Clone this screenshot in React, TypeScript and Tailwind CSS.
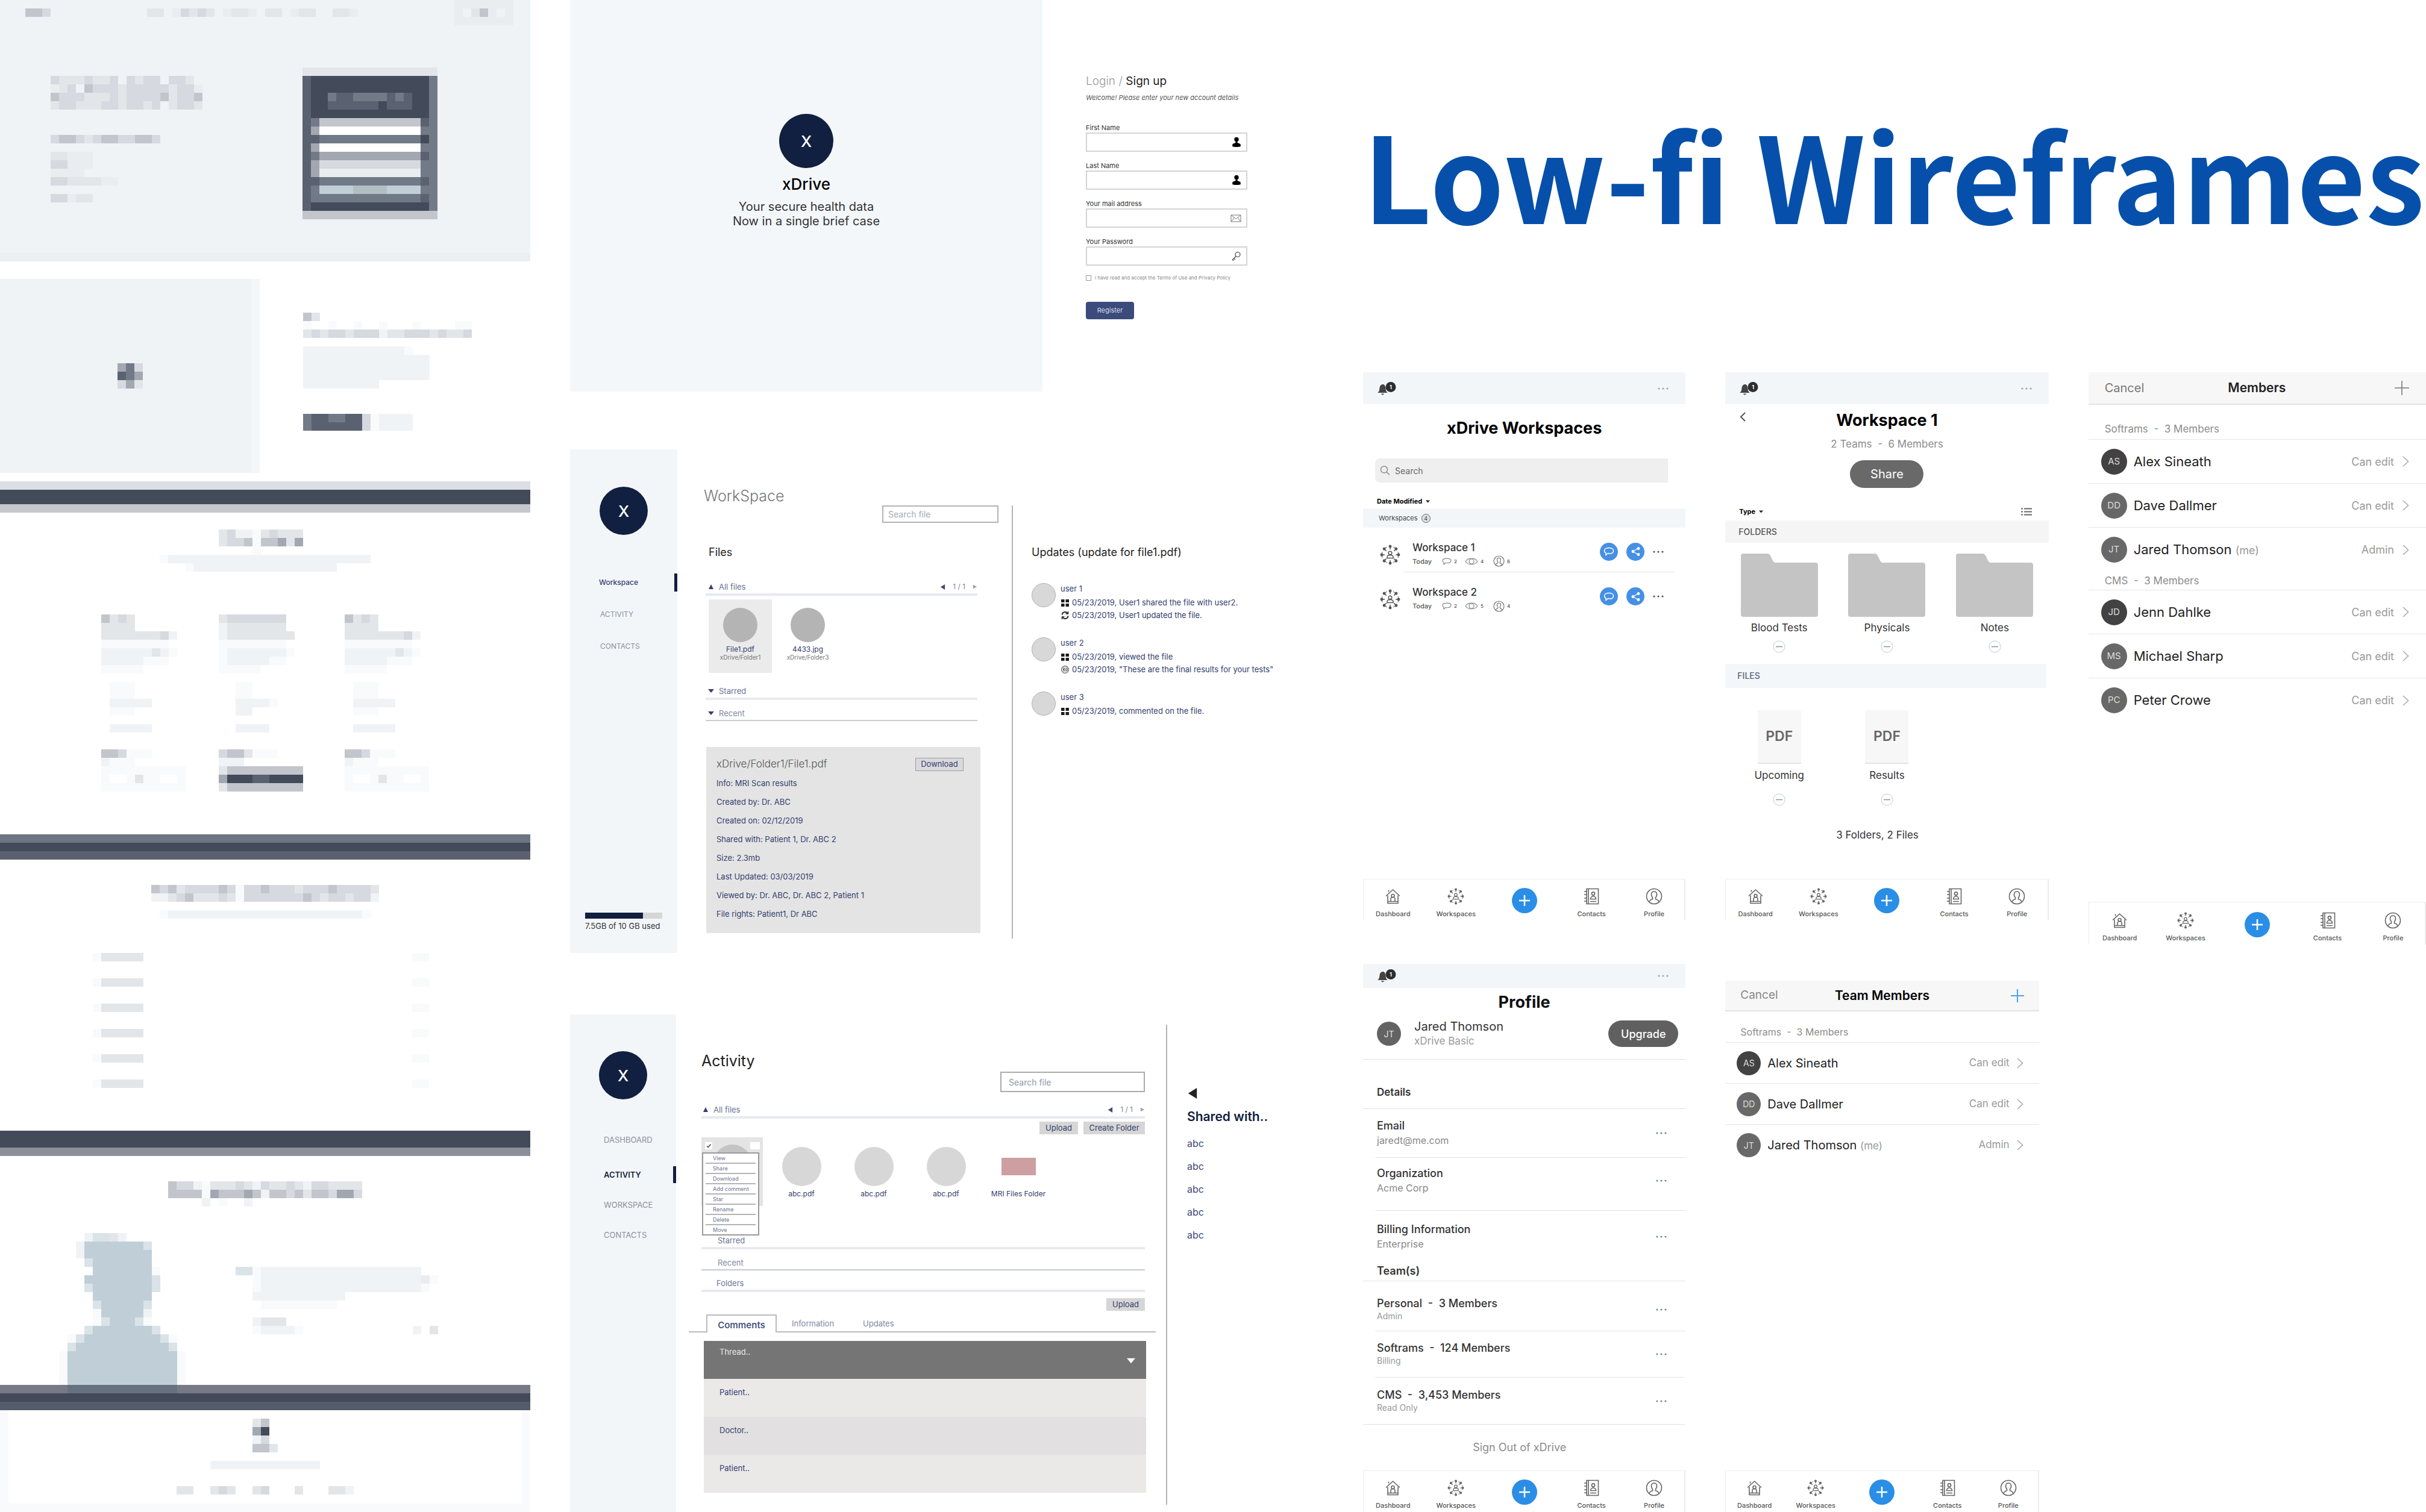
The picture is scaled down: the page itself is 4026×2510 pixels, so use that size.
import React from "react";

/* ---------- Mosaic drawings of the landing page ---------- */

const CELL = 14;

const PALETTE: Record<string, string> = {
  a: "#f9fafb",
  b: "#f0f3f6",
  k: "#e9edf0",
  c: "#e3e6e9",
  d: "#d6d9df",
  e: "#c2c5cc",
  f: "#a3a7b1",
  g: "#737a87",
  x: "#6f7a86",
  h: "#5a6171",
  i: "#434a5a",
  w: "#ffffff",
  t: "#c0cfd7",
  s: "#b1bfc4",
  u: "#d9e3e8",
};

function Mosaic({ rows }: { rows: string[] }) {
  const cols = Math.max(...rows.map((r) => r.length));
  const rects: React.ReactNode[] = [];
  rows.forEach((row, y) => {
    let x = 0;
    while (x < row.length) {
      const ch = row[x];
      let end = x + 1;
      while (end < row.length && row[end] === ch) end++;
      if (PALETTE[ch]) {
        rects.push(<rect key={`${x}-${y}`} x={x} y={y} width={end - x} height={1} fill={PALETTE[ch]} />);
      }
      x = end;
    }
  });
  return (
    <svg
      aria-hidden="true"
      className="block shrink-0"
      width={cols * CELL}
      height={rows.length * CELL}
      viewBox={`0 0 ${cols} ${rows.length}`}
      shapeRendering="crispEdges"
    >
      {rects}
    </svg>
  );
}

const heroCopy = [
  "dcccdccdbdcddbddc",
  "kcdbedddcdddddcddk",
  "edddcccdcddddecdde",
  "cddcccddcddcdbcddc",
  "",
  "",
  "",
  "deedcdeeddeed",
  "",
  "cckkk",
  "ddkkk",
  "kkkk",
  "ddcccckk",
  "",
  "ddkcc",
];

const heroForm = [
  "cccccccccccccccc",
  "hiiiiiiiiiiiiiig",
  "hiiiiiiiiiiiiiig",
  "hiighhgggghghiig",
  "hiihhhhhhihhhiig",
  "hiiiiiiiiiiiiiig",
  "hgeeeeeeeeeeeehg",
  "hfwwwwwwwwwwwwgg",
  "hhxxxxxxxxxxxxig",
  "hfwwwwwwwwwwwwgg",
  "hgffffffffffffhg",
  "hfddddddddddddgg",
  "hfkkkkkkkkkkkkgg",
  "hhxxxxxxxxxxxxhg",
  "hgttttssssttttgg",
  "hxxxxxxxxxxxxxhg",
  "hiiiiiiiiiiiiiig",
  "eeeeeeeeeeeeeeee",
];

const introCopy = [
  "ec",
  "a..a..a..a...a....aa",
  "cdcddcdddbccdddcdccd",
  "",
  "bbbbbbbbbbbba",
  "bbbbbbbbbbbbbbb",
  "bbbbbbbbbbbbbbb",
  "bbbbbbbbbbbbbbb",
  "bbbbbbbbb",
  "",
  "",
  "",
  "ghhgghhdabbbb",
  "ghhhhhhdabbbb",
];

const plansTitle = [
  ".......cdbbacdccc",
  ".......cddeaeefcf",
  "...........a",
  "abbbbbbbbbbbbbbbbbbbbbbbb",
  "...abbbbbbbbbbbbbbbbb",
];

const planPlain = [
  "ecdc",
  "cccc",
  "cccccccdb",
  "aaaaaaaa",
  "bbbbbbcba",
  "bbbbbaaa",
  "aaaaa",
  "",
  ".aaa",
  ".aaa",
  ".bbbbb",
  ".aaa",
  "",
  ".bbbbb",
  "",
  "",
  "eedaaa",
  "baaa",
  "aaaaaaaaaa",
  "awwacaawwa",
  "aaaaaaaaaa",
];

const planActive = [
  "cddddddd",
  "bccccccc",
  "bcccccccc",
  "aaaaaaaa",
  "abbbbbbba",
  "abbbbbaa",
  "aaaaa",
  "",
  "..aa",
  "..aa",
  "..bbbba",
  "..bb",
  "",
  "..bbbb",
  "",
  "",
  "deecaaa",
  "bbb",
  "ceeeeeeeee",
  "fiiihhiiii",
  "ceeeeeeeee",
];

const faqTitle = [
  "edecddddedaddedddcdddeddddc",
  "bbcdecccdcadddddddedcddcddb",
  "",
  ".abbbbbbbbbbbbbbbbbbbbbbba",
];

const peopleTitle = ["eddbacccdcbdccdcbddcccc", "eeeeafeeefebeedeceedffd", "....b.a..b"];

const silhouette = [
  "...buucb",
  "..btttttttu",
  "..btttttttt",
  "...uttttttt",
  "....ttttttta",
  "...ttttttttu",
  "...utttttttu",
  "....ttttttt",
  "....utttttu",
  "....atttttb",
  "....autttua",
  "...utttttttu",
  ".autttttttttua",
  ".utttttttttttu",
  "attttttttttttta",
  "attttttttttttta",
  "attttttttttttta",
  "attttttttttttta",
];

const quote = [
  "uuabbbbbbbbbbbbbbbbbbb",
  "..abbbbbbbbbbbbbbbbbbbka",
  "..abbbbbbbbbbbbbbbbbbba",
  "..bbbbbbbbbbb",
  "...aaaaaaaaa",
  "",
  "..bccc",
  "..abbbba.............b.c",
];

const footerArt = [
  ".........ce",
  ".........fi",
  ".........bd",
  ".........eec",
  "",
  "....bbbbbbbbbbbbb",
  "",
  "",
  "cc..cdc..cd...c...ccb",
];

function LandingPage() {
  return (
    <section aria-label="Landing page" className="flex min-w-0 flex-col">
      <div className="border-b-[14px] border-[#ebeff2] bg-[#eff3f6]">
        <div className="flex items-start justify-between pr-7 pl-[42px]">
          <div className="pt-3.5">
            <Mosaic rows={["eed"]} />
          </div>
          <div className="pt-3.5">
            <Mosaic rows={["cc.kdcdc.kcck.cc.kcc..cck"]} />
          </div>
          <Mosaic rows={["kkkkkkk", "kbcekbk", "kkkkkkk"]} />
        </div>
        <div className="flex items-start justify-between pt-[70px] pr-[154px] pb-14 pl-[84px]">
          <div className="pt-3.5">
            <Mosaic rows={heroCopy} />
          </div>
          <Mosaic rows={heroForm} />
        </div>
      </div>

      <div className="flex items-stretch pt-[29px] pb-3.5">
        <div className="flex h-[322px] w-[49%] items-center justify-center border-r-[14px] border-[#f3f7fa] bg-[#eff3f6] pl-3.5">
          <Mosaic rows={["fgd", "hgf", "dfc"]} />
        </div>
        <div className="pt-14 pl-[72px]">
          <Mosaic rows={introCopy} />
        </div>
      </div>

      <div className="h-[52px] border-t-[14px] border-b-[14px] border-t-[#dbdee2] border-b-[#c4c7ce] bg-[#434a5a]" />

      <div className="pt-7 pb-[71px]">
        <div className="flex justify-center">
          <Mosaic rows={plansTitle} />
        </div>
        <div className="grid grid-cols-[14fr_15fr_10fr] px-[168px] pt-[71px]">
          <Mosaic rows={planPlain} />
          <Mosaic rows={planActive} />
          <Mosaic rows={planPlain} />
        </div>
      </div>

      <div className="h-[42px] border-t-[14px] border-b-[14px] border-t-[#6e7582] border-b-[#5a6070] bg-[#434a5a]" />

      <div className="pt-[42px] pb-[71px]">
        <div className="flex justify-center">
          <Mosaic rows={faqTitle} />
        </div>
        <ul className="flex flex-col gap-7 pt-[57px] pr-[168px] pl-[154px]">
          {[1, 2, 3, 4, 5, 6].map((n) => (
            <li key={n} className="flex justify-between">
              <Mosaic rows={["accccc"]} />
              <Mosaic rows={["aa"]} />
            </li>
          ))}
        </ul>
      </div>

      <div className="h-[42px] border-b-[14px] border-[#8b8f9a] bg-[#434a5a]" />

      <div className="pt-[42px]">
        <div className="flex justify-center">
          <Mosaic rows={peopleTitle} />
        </div>
        <div className="flex items-start gap-[83px] pt-11 pl-[98px]">
          <Mosaic rows={silhouette} />
          <div className="pt-14">
            <Mosaic rows={quote} />
          </div>
        </div>
      </div>

      <div className="border-b-[14px] border-[#545b6b] bg-[#434a5a] pb-3.5">
        <div className="h-3.5 bg-[#757a86] pl-[112px]">
          <div className="h-full w-[182px] bg-[#66717f]" />
        </div>
      </div>

      <div className="flex flex-1 justify-center border-x-[14px] border-b-[14px] border-[#f9fafb] pt-3.5">
        <Mosaic rows={footerArt} />
      </div>
    </section>
  );
}

/* ---------- Shared drawings ---------- */

function PersonSolid() {
  return (
    <svg aria-hidden="true" width="16" height="18" viewBox="0 0 16 18" fill="#000">
      <circle cx="8" cy="4.500" r="3.700" />
      <path d="M6.500 7h3v3l4 1.500c1 .5 1.300 1.300 1.300 2.300V16c-2 1.300-11.600 1.300-13.600 0v-2.200c0-1 .3-1.800 1.300-2.300l4-1.500z" />
    </svg>
  );
}

function Envelope() {
  return (
    <svg aria-hidden="true" width="18" height="13" viewBox="0 0 18 13" fill="none" stroke="#777" strokeWidth="1">
      <path d="M1 1h16v11H1zM1 1l8 6.500L17 1M1 12l5.500-7M17 12l-5.500-7" />
    </svg>
  );
}

function KeyIcon() {
  return (
    <svg aria-hidden="true" width="17" height="17" viewBox="0 0 17 17" fill="none" stroke="#444" strokeWidth="1.200">
      <circle cx="11" cy="5.500" r="4" />
      <path d="M8 8.500 2 14.500M2 14.500l2.500 1M4.500 12l2.500 2" />
    </svg>
  );
}

function Tri({ dir, size, color }: { dir: "up" | "down" | "left" | "right"; size: number; color: string }) {
  const d = { up: "M5 1 9 9H1z", down: "M0 2h10L5 8z", left: "M9 0v10L1 5z", right: "M1 1v8l8-4z" }[dir];
  return (
    <svg aria-hidden="true" className="shrink-0" width={size} height={size} viewBox="0 0 10 10" fill={color}>
      <path d={d} />
    </svg>
  );
}

function GridIcon() {
  return (
    <svg aria-hidden="true" className="shrink-0" width="15" height="14" viewBox="0 0 15 14" fill="#1c1c1c">
      <path d="M1 1h5.500v5H1zM8.500 1H14v5H8.500zM1 8h5.500v5H1zM8.500 8H14v5H8.500z" />
    </svg>
  );
}

function RefreshIcon() {
  return (
    <svg aria-hidden="true" className="shrink-0" width="15" height="15" viewBox="0 0 15 15" fill="none" stroke="#222" strokeWidth="2">
      <path d="M2.500 6.500a5 5 0 0 1 9-2.500M12.500 8.500a5 5 0 0 1-9 2.500" />
      <path d="M12.500 1v4h-4M2.500 14v-4h4" strokeWidth="1.500" />
    </svg>
  );
}

function QuoteIcon() {
  return (
    <svg aria-hidden="true" className="shrink-0" width="15" height="15" viewBox="0 0 16 15" fill="none" stroke="#555" strokeWidth="1.200">
      <circle cx="8" cy="7.500" r="6.300" />
      <path d="M5 4v7M8 4l-2 3 2 4M11 4 9 7.500 11 11M12 5v5" />
    </svg>
  );
}

/* ---------- Sign up screen ---------- */

function Field({ id, label, icon, type = "text" }: { id: string; label: string; icon: React.ReactNode; type?: string }) {
  return (
    <div>
      <label htmlFor={id} className="block text-[11px] leading-[14px] text-[#333]">
        {label}
      </label>
      <div className="mt-px flex h-8 items-center border-2 border-[#d4d4d4] pr-2">
        <input id={id} type={type} className="min-w-0 flex-1 bg-transparent px-2 text-[12px] outline-none" />
        {icon}
      </div>
    </div>
  );
}

function SignUpScreen() {
  return (
    <section aria-label="Sign up" className="grid grid-cols-[784fr_466fr]">
      <div className="flex min-h-[650px] flex-col items-center bg-[#f3f7fa] pt-[189px]">
        <div className="flex size-[90px] items-center justify-center rounded-full bg-[#111f40] text-[26px] font-medium text-white">X</div>
        <h2 className="mt-3 text-[26px] leading-[30px] font-medium text-black">xDrive</h2>
        <p className="mt-2.5 text-center text-[20px] leading-6 text-[#333]">
          Your secure health data
          <br />
          Now in a single brief case
        </p>
      </div>
      <form className="pt-[121px] pl-[72px]" onSubmit={(e) => e.preventDefault()}>
        <div className="w-[268px]">
          <h2 className="text-[19px] leading-7 whitespace-nowrap text-[#222]">
            <a href="#login" className="font-light text-[#999]">
              Login /
            </a>{" "}
            Sign up
          </h2>
          <p className="mt-[5px] text-[11px] leading-4 whitespace-nowrap text-[#555] italic">Welcome! Please enter your new account details</p>
          <div className="mt-[35px] flex flex-col gap-4">
            <Field id="first" label="First Name" icon={<PersonSolid />} />
            <Field id="last" label="Last Name" icon={<PersonSolid />} />
            <Field id="mail" label="Your mail address" type="email" icon={<Envelope />} />
            <Field id="pass" label="Your Password" type="password" icon={<KeyIcon />} />
          </div>
          <label className="mt-3.5 flex items-center gap-1.5 text-[8px] leading-3 whitespace-nowrap text-[#8a8a8a]">
            <input type="checkbox" className="size-[9px] appearance-none border border-[#999]" />I have read and accept the Terms of Use and Privacy Policy
          </label>
          <button type="submit" className="mt-[34px] h-[29px] w-20 rounded-sm bg-[#3b4b7b] text-[11px] text-[#d5daea]">
            Register
          </button>
        </div>
      </form>
    </section>
  );
}

/* ---------- Workspace screen ---------- */

function Logo() {
  return <div className="flex size-20 items-center justify-center self-center rounded-full bg-[#111f40] text-[26px] font-medium text-white">X</div>;
}

function Pager() {
  return (
    <div className="flex items-center text-[12px] text-[#7f88a3]">
      <button type="button" aria-label="Previous page">
        <Tri dir="left" size={9} color="#3c4a78" />
      </button>
      <span className="mx-3">1 / 1</span>
      <button type="button" aria-label="Next page">
        <Tri dir="right" size={8} color="#9aa2ba" />
      </button>
    </div>
  );
}

const fileFacts = [
  "Info: MRI Scan results",
  "Created by: Dr. ABC",
  "Created on: 02/12/2019",
  "Shared with: Patient 1, Dr. ABC 2",
  "Size: 2.3mb",
  "Last Updated: 03/03/2019",
  "Viewed by: Dr. ABC, Dr. ABC 2, Patient 1",
  "File rights: Patient1, Dr ABC",
];

const updates = [
  {
    user: "user 1",
    lines: [
      { icon: <GridIcon />, text: "05/23/2019, User1 shared the file with user2." },
      { icon: <RefreshIcon />, text: "05/23/2019, User1 updated the file." },
    ],
  },
  {
    user: "user 2",
    lines: [
      { icon: <GridIcon />, text: "05/23/2019, viewed the file" },
      { icon: <QuoteIcon />, text: '05/23/2019, "These are the final results for your tests"' },
    ],
  },
  { user: "user 3", lines: [{ icon: <GridIcon />, text: "05/23/2019, commented on the file." }] },
];

function FileTile({ name, path, selected }: { name: string; path: string; selected?: boolean }) {
  return (
    <div className={`flex w-[105px] flex-col items-center pt-3.5 pb-[21px] ${selected ? "bg-[#ebebeb]" : ""}`}>
      <div className="size-[57px] rounded-full bg-[#b4b4b4]" />
      <div className="mt-[5px] text-[12px] leading-[14px] text-[#33406e]">{name}</div>
      <div className="mt-px text-[10px] leading-[10px] text-[#777]">{path}</div>
    </div>
  );
}

function WorkspaceScreen() {
  return (
    <section aria-label="Workspace" className="mt-24 grid grid-cols-[178fr_555fr_517fr]">
      <aside className="flex min-h-[836px] flex-col bg-[#f3f6f9] pt-[62px]">
        <Logo />
        <nav className="mt-16 flex flex-col gap-[23px] text-[12px] leading-[30px] text-[#8b909c]">
          <a href="#workspace" className="border-r-[5px] border-[#111f40] pl-12 font-medium text-[#33406e]">
            Workspace
          </a>
          <a href="#activity" className="pl-[50px]">
            ACTIVITY
          </a>
          <a href="#contacts" className="pl-[50px]">
            CONTACTS
          </a>
        </nav>
        <div className="mt-auto px-[25px] pb-[37px]">
          <div className="h-2.5 bg-[#d6d6d6]">
            <div className="h-full w-3/4 bg-[#111f40]" />
          </div>
          <div className="mt-1 text-[13px] leading-4 whitespace-nowrap text-[#333]">7.5GB of 10 GB used</div>
        </div>
      </aside>

      <div className="flex flex-col pt-[62px] pr-[22px] pl-11">
        <h2 className="text-[25px] leading-[31px] font-light text-[#777]">WorkSpace</h2>
        <input
          type="search"
          aria-label="Search file"
          placeholder="Search file"
          className="h-[29px] w-[193px] self-end border-2 border-[#b4b4b4] px-2 text-[14px] outline-none placeholder:text-[#a4aab8]"
        />
        <h3 className="mt-[37px] pl-2 text-[18px] leading-6 text-[#222]">Files</h3>
        <div className="mt-[34px] mr-[35px] ml-[3px]">
          <div className="flex items-center justify-between border-b-4 border-[#e8e9f0] pl-1 text-[13px] leading-[22px] text-[#6a7394]">
            <span className="flex items-center gap-2">
              <Tri dir="up" size={10} color="#33406e" />
              All files
            </span>
            <Pager />
          </div>
          <div className="mt-1.5 flex gap-[7px] pl-[5px]">
            <FileTile name="File1.pdf" path="xDrive/Folder1" selected />
            <FileTile name="4433.jpg" path="xDrive/Folder3" />
          </div>
          <div className="mt-[19px] flex items-center gap-2 border-b-4 border-[#e9eaed] pl-1 text-[13px] leading-[22px] text-[#6a7394]">
            <Tri dir="down" size={10} color="#33406e" />
            Starred
          </div>
          <div className="mt-[11px] flex items-center gap-2 border-b-2 border-[#c9ccd4] pl-1 text-[13px] leading-[22px] text-[#7f88a3]">
            <Tri dir="down" size={10} color="#33406e" />
            Recent
          </div>
        </div>
        <div className="mt-[43px] mr-[30px] ml-1 bg-[#e4e4e4] pt-[18px] pr-7 pb-4 pl-[17px]">
          <div className="flex h-[22px] items-center justify-between">
            <h3 className="text-[17px] font-light text-[#555]">xDrive/Folder1/File1.pdf</h3>
            <button type="button" className="h-[22px] w-20 border border-[#9a9dab] bg-[#d9d9dc] text-[13px] text-[#33406e]">
              Download
            </button>
          </div>
          <ul className="mt-[5px] text-[13px] leading-[31px] text-[#33406e]">
            {fileFacts.map((f) => (
              <li key={f}>{f}</li>
            ))}
          </ul>
        </div>
      </div>

      <div className="mt-[93px] mb-6 border-l-2 border-[#b5b5b5] pt-[66px] pl-[31px]">
        <h3 className="text-[18px] leading-6 text-[#222]">Updates (update for file1.pdf)</h3>
        <ul className="mt-[39px] flex flex-col gap-6">
          {updates.map((u) => (
            <li key={u.user} className="flex min-h-[66px] gap-2">
              <div className="size-10 shrink-0 rounded-full border border-[#b0b0b0] bg-[#d8d8d8]" />
              <div className="pt-0.5 text-[13px] whitespace-nowrap text-[#33406e]">
                <div className="mb-1.5 leading-[14px]">{u.user}</div>
                {u.lines.map((l) => (
                  <div key={l.text} className="flex items-center gap-1 leading-[21px]">
                    {l.icon}
                    {l.text}
                  </div>
                ))}
              </div>
            </li>
          ))}
        </ul>
      </div>
    </section>
  );
}

/* ---------- Activity screen ---------- */

const menuItems = ["View", "Share", "Download", "Add comment", "Star", "Rename", "Delete", "Move"];

function ActivityScreen() {
  return (
    <section aria-label="Activity" className="mt-[102px] grid flex-1 grid-cols-[176fr_813fr_261fr]">
      <aside className="flex flex-col bg-[#f3f6f9] pt-[61px]">
        <Logo />
        <nav className="mt-[53px] flex flex-col gap-[22px] text-[13px] leading-7 text-[#8b909c]">
          <a href="#dashboard" className="mb-2 pl-14">
            DASHBOARD
          </a>
          <a href="#activity" className="border-r-[5px] border-[#111f40] pl-14 font-semibold text-[#111f40]">
            ACTIVITY
          </a>
          <a href="#workspace" className="pl-14">
            WORKSPACE
          </a>
          <a href="#contacts" className="pl-14">
            CONTACTS
          </a>
        </nav>
      </aside>

      <div className="flex flex-col pt-[61px] pr-[35px] pl-[42px]">
        <h2 className="text-[25px] leading-8 text-[#222]">Activity</h2>
        <input
          type="search"
          aria-label="Search file"
          placeholder="Search file"
          className="mt-0.5 h-[34px] w-60 self-end border-2 border-[#aaa] px-3 text-[14px] outline-none placeholder:text-[#8e97ab]"
        />
        <div className="mt-[18px] flex items-center justify-between border-b-4 border-[#e8e9f0] pl-0.5 text-[13px] leading-[22px] text-[#6a7394]">
          <span className="flex items-center gap-2">
            <Tri dir="up" size={10} color="#33406e" />
            All files
          </span>
          <Pager />
        </div>
        <div className="mt-[5px] flex justify-end gap-[9px] text-[13px] leading-[21px] text-[#33406e]">
          <button type="button" className="w-16 bg-[#d6d6d6]">
            Upload
          </button>
          <button type="button" className="w-[102px] bg-[#d6d6d6]">
            Create Folder
          </button>
        </div>

        <div className="mt-[5px] flex">
          <div className="relative mr-1 flex h-[114px] w-[102px] justify-center bg-[#e4e4e4] pt-3">
            <div className="size-[65px] rounded-full bg-[#c4c4c4]" />
            <input
              type="checkbox"
              defaultChecked
              aria-label="Select file"
              className="absolute top-2 left-1.5 size-3 appearance-none bg-white"
            />
            <svg aria-hidden="true" className="absolute top-2 left-1.5" width="12" height="12" viewBox="0 0 12 12" fill="none" stroke="#444" strokeWidth="1.500">
              <path d="m3 6.500 2 2L9.500 3.500" />
            </svg>
            <button type="button" aria-label="File menu" className="absolute top-2 right-[5px] h-3 w-4 bg-white" />
            <ul className="absolute top-[25px] left-px flex w-[95px] flex-col border-2 border-[#999] bg-white px-1 text-[9px] leading-[15px] text-[#6a7394]">
              {menuItems.map((m) => (
                <li key={m} className="border-b-2 border-[#b4b4b4] pl-3 last:border-b-0">
                  <button type="button" className="block">
                    {m}
                  </button>
                </li>
              ))}
            </ul>
          </div>
          {[1, 2, 3].map((n) => (
            <div key={n} className="flex w-[120px] flex-col items-center pt-4 text-[12px] leading-4 text-[#33406e]">
              <div className="mb-[5px] size-[65px] rounded-full bg-[#d7d7d7]" />
              abc.pdf
            </div>
          ))}
          <div className="flex w-[120px] flex-col items-center pt-4 text-[12px] leading-4 text-[#33406e]">
            <div className="mb-[5px] flex h-[65px] items-center">
              <div className="h-[29px] w-[57px] bg-[#cd9fa1]" />
            </div>
            MRI Files Folder
          </div>
        </div>

        <div className="mt-[46px] border-b-4 border-[#e9eaed] pl-[27px] text-[13px] leading-[22px] text-[#6a7394]">Starred</div>
        <div className="mt-[11px] border-b-2 border-[#c5c8d4] pl-[27px] text-[13px] leading-[22px] text-[#7f88a3]">Recent</div>
        <div className="mt-2.5 border-b-4 border-[#e8e9f0] pl-[25px] text-[13px] leading-[22px] text-[#6a7394]">Folders</div>
        <button type="button" className="mt-2.5 w-16 self-end bg-[#d6d6d6] text-[13px] leading-[21px] text-[#33406e]">
          Upload
        </button>

        <div role="tablist" className="mt-1.5 -mr-[18px] -ml-[21px] flex h-[30px] items-end border-b-2 border-[#bbb] pl-[29px] text-[13px] text-[#7f88a3]">
          <button
            type="button"
            role="tab"
            aria-selected="true"
            className="-mb-0.5 h-[30px] w-[117px] border-2 border-b-0 border-[#bbb] bg-white pt-1 text-[15px] font-semibold text-[#4a5680]"
          >
            Comments
          </button>
          <button type="button" role="tab" aria-selected="false" className="ml-[25px] h-6">
            Information
          </button>
          <button type="button" role="tab" aria-selected="false" className="ml-12 h-6">
            Updates
          </button>
        </div>

        <div className="mt-3.5 -mr-0.5 ml-1 text-[13px] leading-4 text-[#33406e]">
          <div className="flex h-[63px] items-start justify-between bg-[#757575] pt-2.5 pr-[18px] pl-[26px] text-[#e6e6e6]">
            Thread..
            <button type="button" aria-label="Collapse thread" className="pt-4">
              <Tri dir="down" size={14} color="#fff" />
            </button>
          </div>
          <div className="h-[63px] bg-[#ebe8e8] pt-3.5 pl-[26px]">Patient..</div>
          <div className="h-[63px] bg-[#e2e0e0] pt-3.5 pl-[26px]">Doctor..</div>
          <div className="h-[63px] bg-[#ebe8e8] pt-3.5 pl-[26px]">Patient..</div>
        </div>
      </div>

      <div className="mt-[17px] mb-3 border-l-2 border-[#b5b5b5] pt-[105px] pl-[33px]">
        <button type="button" aria-label="Back" className="block">
          <Tri dir="left" size={18} color="#222" />
        </button>
        <h3 className="mt-[18px] text-[21px] leading-6 font-semibold whitespace-nowrap text-[#111f40]">Shared with..</h3>
        <ul className="mt-[13px] text-[16px] leading-[38px] text-[#3c4a78]">
          {[1, 2, 3, 4, 5].map((n) => (
            <li key={n}>abc</li>
          ))}
        </ul>
      </div>
    </section>
  );
}

/* ---------- Phone screens ---------- */

function HomeIcon() {
  return (
    <svg aria-hidden="true" width="25" height="28" viewBox="0 0 25 28" fill="none" stroke="#666" strokeWidth="1.600">
      <path d="M1 13.500 12.500 3 24 13.500M5.500 6.500v-3M4 12.500V25.500h17V12.500M4 22.500h17" />
      <circle cx="12.500" cy="13" r="2.500" />
      <path d="M9 22v-3.500c0-4 7-4 7 0V22" />
    </svg>
  );
}

function NetworkIcon({ size, color }: { size: number; color: string }) {
  const spokes = [0, 45, 90, 135, 180, 225, 270, 315];
  return (
    <svg aria-hidden="true" className="shrink-0" width={size} height={size} viewBox="0 0 34 34" fill="none" stroke={color} strokeWidth="1.500">
      <circle cx="17" cy="14" r="2.800" />
      <path d="M12 22.500v-2c0-4 10-4 10 0v2z" />
      {spokes.map((a) => (
        <g key={a} transform={`rotate(${a} 17 17)`}>
          <path d="M17 8V5" />
          <circle cx="17" cy="3" r="1.700" fill={color} />
        </g>
      ))}
      <path d="M8 6.500a14 14 0 0 1 4-2.300M22 4.200a14 14 0 0 1 4 2.300M4 22a14 14 0 0 1 0-10M30 12a14 14 0 0 1 0 10M8 27.500a14 14 0 0 0 4 2.300M22 29.800a14 14 0 0 0 4-2.300" strokeWidth="1" />
    </svg>
  );
}

function ContactsIcon() {
  return (
    <svg aria-hidden="true" width="26" height="28" viewBox="0 0 26 28" fill="none" stroke="#666" strokeWidth="1.600">
      <path d="M5 1.500h19.500v25H5zM8 1.500v25M1 6h5M1 11h5M1 17h5M1 22h5" />
      <circle cx="16" cy="9.500" r="2.600" />
      <path d="M11.500 18.500c0-6 9-6 9 0zM11 22.500h10" />
    </svg>
  );
}

function ProfileIcon({ size }: { size: number }) {
  return (
    <svg aria-hidden="true" width={size} height={size} viewBox="0 0 28 28" fill="none" stroke="#666" strokeWidth="1.600">
      <circle cx="14" cy="14" r="12.500" />
      <path d="M6 23.500c.5-3.500 3-4 5.500-5v-2.500c-3-3-3-10 2.500-10s5.500 7 2.500 10v2.500c2.500 1 5 1.500 5.500 5" />
    </svg>
  );
}

function TabBar({ tall }: { tall?: boolean }) {
  const item = "flex flex-col items-center gap-[7px] text-[11px] leading-4 font-medium text-[#555]";
  return (
    <nav
      className={`mt-auto grid grid-cols-[98fr_112fr_116fr_108fr_101fr] border-t border-r-2 border-l border-[#ececec] bg-white ${
        tall ? "h-[71px] pt-4" : "h-[69px] pt-3.5"
      }`}
    >
      <a href="#dashboard" className={item}>
        <HomeIcon />
        Dashboard
      </a>
      <a href="#workspaces" className={item}>
        <NetworkIcon size={28} color="#666" />
        Workspaces
      </a>
      <button type="button" aria-label="Add" className="flex size-[42px] items-center justify-center justify-self-center rounded-full bg-[#2a8ee6]">
        <svg aria-hidden="true" width="18" height="18" viewBox="0 0 18 18" stroke="#fff" strokeWidth="2.500">
          <path d="M9 0v18M0 9h18" />
        </svg>
      </button>
      <a href="#contacts" className={item}>
        <ContactsIcon />
        Contacts
      </a>
      <a href="#profile" className={item}>
        <ProfileIcon size={28} />
        Profile
      </a>
    </nav>
  );
}

function Dots({ color }: { color: string }) {
  return (
    <svg aria-hidden="true" width="18" height="4" viewBox="0 0 18 4" fill={color}>
      <circle cx="2" cy="2" r="1.600" />
      <circle cx="9" cy="2" r="1.600" />
      <circle cx="16" cy="2" r="1.600" />
    </svg>
  );
}

function StatusBar({ short }: { short?: boolean }) {
  return (
    <div className={`flex items-center justify-between bg-[#f3f6f9] pr-7 pl-[23px] ${short ? "h-10" : "h-[53px]"}`}>
      <button type="button" aria-label="Notifications" className="relative">
        <svg aria-hidden="true" className="block" width="32" height="24" viewBox="0 0 32 24">
          <path d="M1 19c3-2 3-4 3.500-8C5 7 7 5.500 9.500 5S14 7 14.500 11c.5 4 .5 6 3.500 8z" fill="#444" />
          <path d="M7 20.500c1 2.500 4 2.500 5 0z" fill="#444" />
          <circle cx="23" cy="9.500" r="8.500" fill="#2e2e2e" />
        </svg>
        <span className="absolute top-[3px] right-[5px] w-2 text-center text-[9px] leading-[13px] font-bold text-white">1</span>
      </button>
      <button type="button" aria-label="More">
        <Dots color="#a0a4aa" />
      </button>
    </div>
  );
}

function WorkspaceRow({ name, comments, views, people, divider }: { name: string; comments: number; views: number; people: number; divider?: boolean }) {
  return (
    <li className="flex pl-7">
      <div className="flex w-[39px] items-center pt-4">
        <NetworkIcon size={34} color="#555" />
      </div>
      <div className={`mr-[17px] flex h-[74px] flex-1 items-center justify-between pt-3.5 pr-[19px] pl-[15px] ${divider ? "border-b border-[#e4e4e4]" : ""}`}>
        <div>
          <div className="text-[17px] leading-6 font-medium text-[#333]">{name}</div>
          <div className="flex items-center text-[11px] leading-[22px] font-medium text-[#555]">
            <span className="w-[49px]">Today</span>
            <span className="flex w-[38px] items-center gap-1 text-[8px]">
              <svg aria-hidden="true" width="16" height="12" viewBox="0 0 16 12" fill="none" stroke="#888" strokeWidth="1.200">
                <path d="M1 4.500C1 0 15 0 15 4.500S9 9 6 8.500L3 11V8C1.500 7 1 6 1 4.500z" />
              </svg>
              {comments}
            </span>
            <span className="flex w-[47px] items-center gap-1 text-[8px]">
              <svg aria-hidden="true" width="22" height="12" viewBox="0 0 22 12" fill="none" stroke="#888" strokeWidth="1.200">
                <path d="M1 6C5-.5 17-.5 21 6 17 12.500 5 12.500 1 6z" />
                <circle cx="11" cy="6" r="4" />
              </svg>
              {views}
            </span>
            <span className="flex items-center gap-1 text-[8px]">
              <ProfileIcon size={19} />
              {people}
            </span>
          </div>
        </div>
        <div className="flex items-center gap-3.5 pb-2">
          <button type="button" aria-label="Comment" className="flex size-[30px] items-center justify-center rounded-full bg-[#4590e4]">
            <svg aria-hidden="true" width="18" height="15" viewBox="0 0 18 15" fill="none" stroke="#fff" strokeWidth="1.500">
              <path d="M1.500 6C1.500 0 16.500 0 16.500 6S10 11 7.500 10.500L4 13.500V10C2 9 1.500 7.500 1.500 6z" />
            </svg>
          </button>
          <button type="button" aria-label="Share" className="flex size-[30px] items-center justify-center rounded-full bg-[#4590e4]">
            <svg aria-hidden="true" width="17" height="17" viewBox="0 0 17 17" fill="#fff" stroke="#fff" strokeWidth="1.300">
              <path d="M13 3 4 8.500 13 14" fill="none" />
              <circle cx="13" cy="3.500" r="1.800" />
              <circle cx="4" cy="8.500" r="1.800" />
              <circle cx="13" cy="13.500" r="1.800" />
            </svg>
          </button>
          <button type="button" aria-label="More">
            <Dots color="#555" />
          </button>
        </div>
      </div>
    </li>
  );
}

function PhoneWorkspaces() {
  return (
    <section aria-label="xDrive Workspaces" className="flex min-h-[910px] flex-col self-start">
      <StatusBar />
      <h2 className="mt-6 text-center text-[27px] leading-8 font-bold text-black">xDrive Workspaces</h2>
      <label className="mt-[34px] mr-[29px] ml-5 flex h-10 items-center gap-2 rounded-l-lg bg-[#efefef] px-2">
        <svg aria-hidden="true" width="17" height="18" viewBox="0 0 17 18" fill="none" stroke="#888" strokeWidth="1.400">
          <circle cx="7" cy="7.500" r="5.500" />
          <path d="m11 11.500 5 5" />
        </svg>
        <input type="search" placeholder="Search" className="min-w-0 flex-1 bg-transparent text-[14px] outline-none placeholder:text-[#666]" />
      </label>
      <button type="button" className="mt-[22px] flex items-center gap-1.5 self-start pl-[23px] text-[11px] leading-[18px] font-bold text-black">
        Date Modified <Tri dir="down" size={7} color="#222" />
      </button>
      <div className="mt-[3px] flex h-8 items-center gap-1.5 bg-[#f3f6f9] pl-[26px] text-[11px] text-[#444]">
        Workspaces
        <span className="flex size-[15px] items-center justify-center rounded-full border border-[#666] bg-[#dcdfe2] text-[9px] leading-none">4</span>
      </div>
      <ul>
        <WorkspaceRow name="Workspace 1" comments={2} views={4} people={6} divider />
        <WorkspaceRow name="Workspace 2" comments={2} views={5} people={4} />
      </ul>
      <TabBar />
    </section>
  );
}

function MinusBadge() {
  return (
    <button type="button" aria-label="Options" className="block">
      <svg aria-hidden="true" className="block" width="21" height="21" viewBox="0 0 21 21" fill="none">
        <circle cx="10.500" cy="10.500" r="9.500" stroke="#c4c8d4" />
        <path d="M5 10.500h11" stroke="#8b909c" strokeWidth="1.500" />
      </svg>
    </button>
  );
}

function PhoneWorkspace() {
  return (
    <section aria-label="Workspace 1" className="flex min-h-[910px] flex-col self-start">
      <StatusBar />
      <div className="mt-[11px] grid grid-cols-[48px_1fr_48px] items-start">
        <button type="button" aria-label="Back" className="pt-0.5 pl-6">
          <svg aria-hidden="true" width="10" height="16" viewBox="0 0 10 16" fill="none" stroke="#555" strokeWidth="2">
            <path d="M9 1 2 8l7 7" />
          </svg>
        </button>
        <h2 className="text-center text-[27px] leading-8 font-bold text-black">Workspace 1</h2>
      </div>
      <p className="mt-3 text-center text-[17px] leading-[22px] text-[#8c8c8c]">2 Teams &nbsp;-&nbsp; 6 Members</p>
      <button type="button" className="mt-4 h-[46px] w-[122px] self-center rounded-full bg-[#696969] text-[20px] text-white">
        Share
      </button>
      <div className="mt-[30px] flex items-center justify-between pr-7 pl-[23px]">
        <button type="button" className="flex items-center gap-1.5 text-[11px] leading-[18px] font-bold text-black">
          Type <Tri dir="down" size={7} color="#222" />
        </button>
        <svg aria-hidden="true" width="18" height="13" viewBox="0 0 18 13" stroke="#666" strokeWidth="2">
          <path d="M0 1.500h3M5 1.500h13M0 6.500h3M5 6.500h13M0 11.500h3M5 11.500h13" />
        </svg>
      </div>
      <h3 className="mt-1.5 bg-[#f5f5f5] pl-[22px] text-[14px] leading-[37px] font-medium text-[#555]">FOLDERS</h3>
      <div className="grid grid-cols-3 pt-[18px]">
        {["Blood Tests", "Physicals", "Notes"].map((n) => (
          <div key={n} className="flex flex-col items-center">
            <svg aria-hidden="true" width="128" height="105" viewBox="0 0 128 105">
              <path d="M4 0h40c3 0 4.500 2 6 5 2 5 3.500 9 7 10H124q4 0 4 4V101q0 4-4 4H4q-4 0-4-4V4Q0 0 4 0z" fill="#c4c4c4" />
            </svg>
            <div className="mt-2 mb-[11px] text-[17px] leading-5 text-[#333]">{n}</div>
            <MinusBadge />
          </div>
        ))}
      </div>
      <h3 className="mt-[18px] mr-1 bg-[#f3f7fa] pl-5 text-[14px] leading-10 font-medium text-[#5a6478]">FILES</h3>
      <div className="grid grid-cols-3 pt-[37px]">
        {["Upcoming", "Results"].map((n) => (
          <div key={n} className="flex flex-col items-center">
            <div className="flex h-[89px] w-[72px] items-center justify-center border-b-2 border-[#e3e3e3] bg-[#f7f7f7] text-[23px] font-semibold text-[#666]">
              PDF
            </div>
            <div className="mt-[9px] mb-5 text-[17px] leading-5 text-[#333]">{n}</div>
            <MinusBadge />
          </div>
        ))}
      </div>
      <p className="mt-[38px] pr-8 text-center text-[17px] leading-5 text-[#333]">3 Folders, 2 Files</p>
      <TabBar />
    </section>
  );
}

type Member = { initials: string; name: string; role: string; me?: boolean; dark?: boolean };

const softrams: Member[] = [
  { initials: "AS", name: "Alex Sineath", role: "Can edit", dark: true },
  { initials: "DD", name: "Dave Dallmer", role: "Can edit" },
  { initials: "JT", name: "Jared Thomson", role: "Admin", me: true },
];

const cms: Member[] = [
  { initials: "JD", name: "Jenn Dahlke", role: "Can edit", dark: true },
  { initials: "MS", name: "Michael Sharp", role: "Can edit" },
  { initials: "PC", name: "Peter Crowe", role: "Can edit" },
];

function MemberList({ members, compact }: { members: Member[]; compact?: boolean }) {
  return (
    <ul>
      {members.map((m) => (
        <li
          key={m.name}
          className={`flex items-center border-b border-[#e6e6e6] last:border-b-0 ${compact ? "h-[68px] pr-[26px] pl-[19px]" : "h-[73px] pr-7 pl-[21px]"}`}
        >
          <span
            className={`flex shrink-0 items-center justify-center rounded-full text-[#ddd] ${m.dark ? "bg-[#424242]" : "bg-[#686868]"} ${
              compact ? "size-10 text-[14px]" : "size-[43px] text-[15px]"
            }`}
          >
            {m.initials}
          </span>
          <span className={`ml-[11px] flex-1 whitespace-nowrap text-[#222] ${compact ? "text-[20px]" : "text-[22px]"}`}>
            {m.name} {m.me && <span className={`text-[#999] ${compact ? "text-[17px]" : "text-[18px]"}`}>(me)</span>}
          </span>
          <button type="button" className={`flex items-center text-[#999] ${compact ? "gap-3 text-[17px]" : "gap-3.5 text-[18px]"}`}>
            {m.role}
            <svg aria-hidden="true" width="11" height="18" viewBox="0 0 11 18" fill="none" stroke="#aaa" strokeWidth="1.600">
              <path d="m1 1 8.500 8L1 17" />
            </svg>
          </button>
        </li>
      ))}
    </ul>
  );
}

function PhoneMembers() {
  return (
    <section aria-label="Members" className="flex min-h-[950px] flex-col self-start">
      <header className="grid h-[54px] grid-cols-3 items-center border-b-2 border-[#e2e2e2] bg-[#f7f7f7] pr-7 pl-[27px]">
        <button type="button" className="justify-self-start text-[20px] text-[#777]">
          Cancel
        </button>
        <h2 className="text-center text-[21px] font-semibold text-[#222]">Members</h2>
        <button type="button" aria-label="Add member" className="justify-self-end">
          <svg aria-hidden="true" width="24" height="24" viewBox="0 0 24 24" stroke="#777" strokeWidth="1.500">
            <path d="M12 0v24M0 12h24" />
          </svg>
        </button>
      </header>
      <h3 className="border-b border-[#e6e6e6] pt-[29px] pb-1.5 pl-[27px] text-[17px] leading-[22px] text-[#8c8c8c]">Softrams &nbsp;-&nbsp; 3 Members</h3>
      <MemberList members={softrams} />
      <h3 className="border-b border-[#e6e6e6] pt-1 pb-1 pl-[27px] text-[17px] leading-[22px] text-[#8c8c8c]">CMS &nbsp;-&nbsp; 3 Members</h3>
      <MemberList members={cms} />
      <TabBar tall />
    </section>
  );
}

function PhoneTeam() {
  return (
    <section aria-label="Team Members" className="mt-7 mr-4 flex min-h-[882px] flex-col self-start">
      <header className="grid h-[51px] grid-cols-[1fr_2fr_1fr] items-center border-b-2 border-[#e2e2e2] bg-[#f7f7f7] px-[25px]">
        <button type="button" className="justify-self-start text-[19px] text-[#888]">
          Cancel
        </button>
        <h2 className="text-center text-[21px] font-semibold text-black">Team Members</h2>
        <button type="button" aria-label="Add member" className="justify-self-end">
          <svg aria-hidden="true" width="22" height="22" viewBox="0 0 22 22" stroke="#4aa0f0" strokeWidth="2">
            <path d="M11 0v22M0 11h22" />
          </svg>
        </button>
      </header>
      <h3 className="border-b border-[#e6e6e6] pt-[23px] pb-1.5 pl-[25px] text-[16px] leading-[22px] text-[#8c8c8c]">Softrams &nbsp;-&nbsp; 3 Members</h3>
      <MemberList members={softrams} compact />
      <TabBar />
    </section>
  );
}

const details = [
  { title: "Email", sub: "jaredt@me.com", pad: "pt-4 pb-4", rule: true },
  { title: "Organization", sub: "Acme Corp", pad: "pt-3.5 pb-[25px]", rule: true },
  { title: "Billing Information", sub: "Enterprise", pad: "pt-[19px] pb-[17px]", rule: false },
];

const teams = [
  { title: "Personal \u00a0-\u00a0 3 Members", sub: "Admin", pad: "pt-[26px] pb-3.5", rule: true },
  { title: "Softrams \u00a0-\u00a0 124 Members", sub: "Billing", pad: "pt-[17px] pb-[17px]", rule: true },
  { title: "CMS \u00a0-\u00a0 3,453 Members", sub: "Read Only", pad: "pt-[18px] pb-[17px]", rule: false },
];

function PhoneProfile() {
  return (
    <section aria-label="Profile" className="flex min-h-[910px] flex-col self-start">
      <StatusBar short />
      <h2 className="mt-2 text-center text-[27px] leading-8 font-bold text-[#111]">Profile</h2>
      <div className="mt-3 flex items-center border-b border-[#e2e2e2] pr-3 pb-[18px] pl-[23px]">
        <span className="flex size-10 items-center justify-center rounded-full bg-[#636363] text-[14px] text-[#ddd]">JT</span>
        <div className="ml-[22px] flex-1">
          <div className="text-[20px] leading-6 text-[#333]">Jared Thomson</div>
          <div className="text-[17px] leading-6 text-[#999]">xDrive Basic</div>
        </div>
        <button type="button" className="h-11 w-[116px] rounded-full bg-[#606060] text-[18px] font-medium text-white">
          Upgrade
        </button>
      </div>
      <h3 className="border-b border-[#e2e2e2] pt-[42px] pb-[15px] pl-[23px] text-[17px] leading-6 font-semibold text-[#333]">Details</h3>
      <ul className="pl-5">
        {details.map((d) => (
          <li key={d.title} className={`flex items-center justify-between pr-[31px] pl-[3px] ${d.pad} ${d.rule ? "border-b border-[#e6e6e6]" : ""}`}>
            <div>
              <div className="text-[18px] leading-6 font-medium text-[#333]">{d.title}</div>
              <div className="text-[16px] leading-6 text-[#888]">{d.sub}</div>
            </div>
            <button type="button" aria-label={`Edit ${d.title}`}>
              <Dots color="#7b8797" />
            </button>
          </li>
        ))}
      </ul>
      <h3 className="border-b border-[#e2e2e2] pt-1 pb-1 pl-[23px] text-[18px] leading-6 font-semibold text-[#333]">Team(s)</h3>
      <ul className="border-b border-[#e2e2e2] pl-5">
        {teams.map((d) => (
          <li key={d.title} className={`flex items-center justify-between pr-[31px] pl-[3px] ${d.pad} ${d.rule ? "border-b border-[#e6e6e6]" : ""}`}>
            <div>
              <div className="text-[18px] leading-[22px] font-medium text-[#333]">{d.title}</div>
              <div className="text-[14px] leading-5 text-[#999]">{d.sub}</div>
            </div>
            <button type="button" aria-label={`Edit ${d.sub}`}>
              <Dots color="#7b8797" />
            </button>
          </li>
        ))}
      </ul>
      <button type="button" className="mt-[26px] mr-4 self-center text-[18px] leading-6 text-[#8c8c8c]">
        Sign Out of xDrive
      </button>
      <TabBar />
    </section>
  );
}

export default function App() {
  return (
    <main className="grid min-h-screen grid-cols-[minmax(0,880fr)_minmax(0,1250fr)_minmax(0,1764fr)] gap-x-[66px] overflow-hidden bg-white font-['Inter',sans-serif]">
      <LandingPage />
      <div className="flex min-w-0 flex-col">
        <SignUpScreen />
        <WorkspaceScreen />
        <ActivityScreen />
      </div>
      <div className="min-w-0">
        <h1 className="mt-[186px] font-['Noto_Sans_CJK_SC','Noto_Sans',sans-serif] text-[197px] leading-[200px] font-bold whitespace-nowrap text-[#0650ab]">
          Low-fi Wireframes
        </h1>
        <div className="mt-[232px] grid grid-cols-[535fr_536fr_560fr] gap-x-[66px] gap-y-8">
          <PhoneWorkspaces />
          <PhoneWorkspace />
          <PhoneMembers />
          <PhoneProfile />
          <PhoneTeam />
        </div>
      </div>
    </main>
  );
}
